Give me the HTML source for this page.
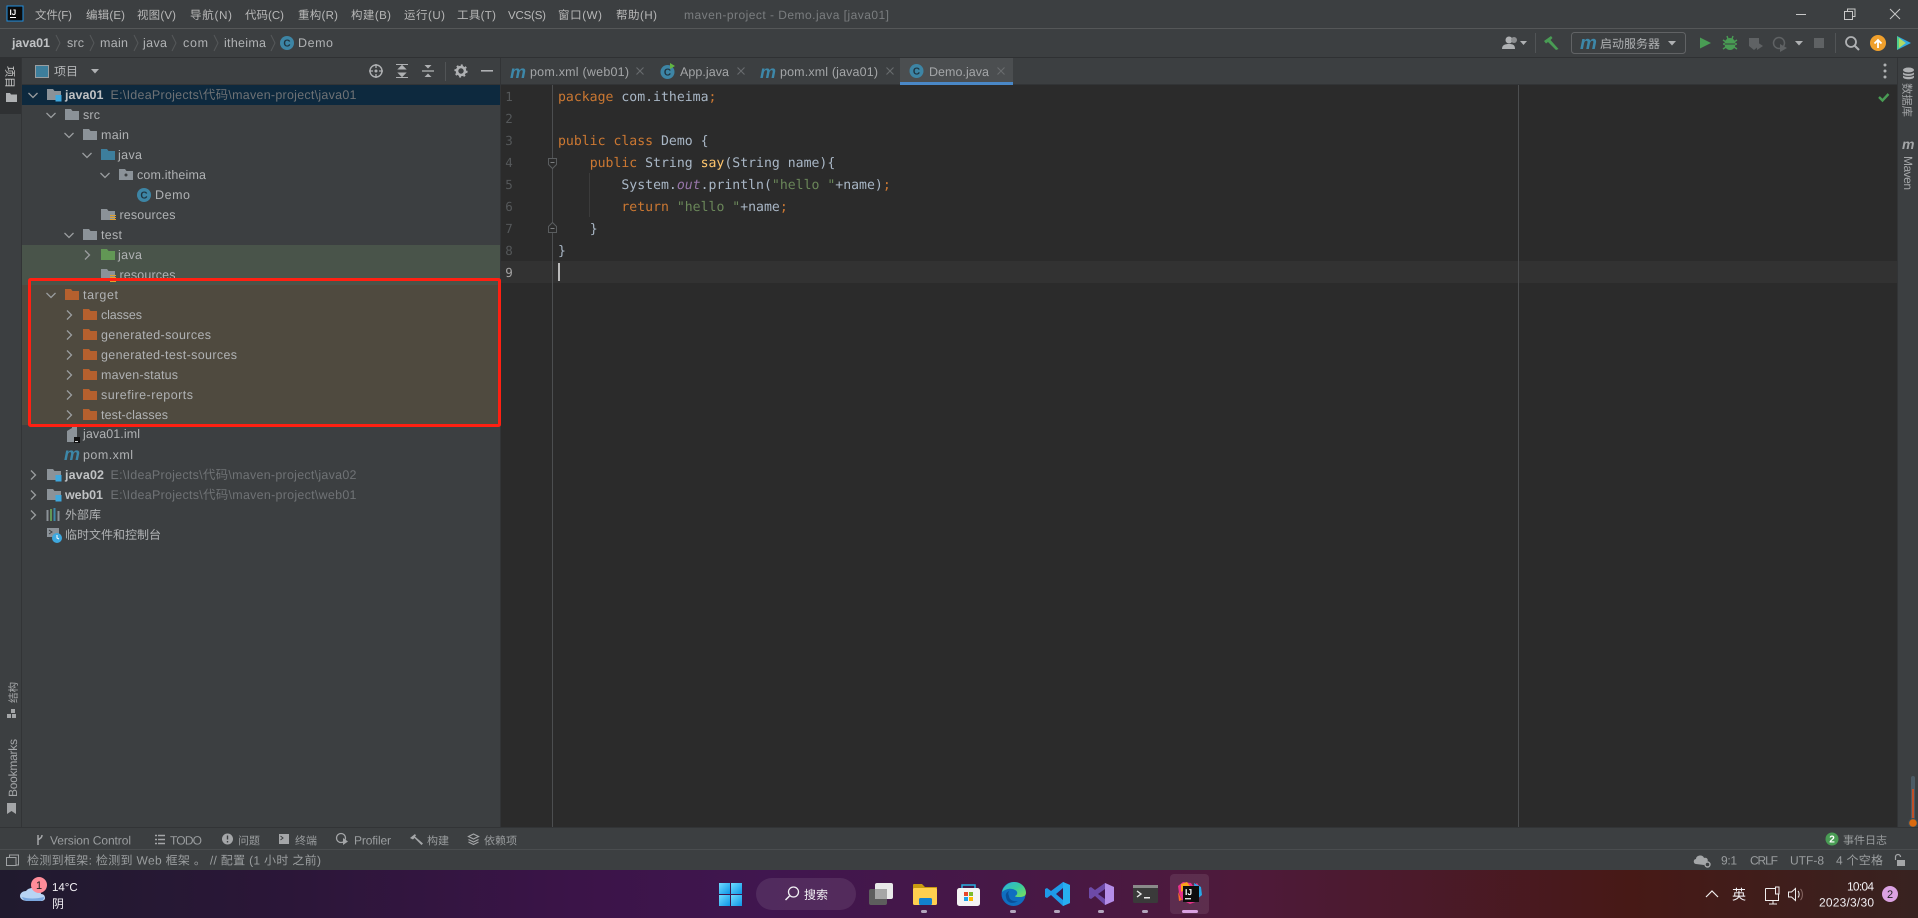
<!DOCTYPE html>
<html><head><meta charset="utf-8"><title>maven-project - Demo.java [java01]</title>
<style>
html,body{margin:0;padding:0;width:1918px;height:918px;overflow:hidden;background:#3c3f41}
svg{display:block;position:absolute;left:0;top:0;filter:blur(.3px)}
text{font-family:"Liberation Sans","Noto Sans CJK SC",sans-serif;font-size:12.5px;fill:#b0b2b4;text-rendering:geometricPrecision;white-space:pre}
.up text{transform:translateY(-.8px)}
.c{font-size:12px}
.m{font-size:11.5px;fill:#b8b8b8}
.b{font-weight:700;fill:#c0c2c4}
.p{font-size:12.5px;fill:#6f7275}
.t{font-size:12.5px;fill:#a4a6a8}
.s{font-size:12px;fill:#9a9d9f}
.s2{font-size:11px;fill:#9a9d9f}
.code{font-family:"DejaVu Sans Mono",monospace;font-size:13.17px;fill:#a9b7c6}
.k{fill:#cc7832}.g{fill:#6a8759}.f{fill:#ffc66d}.o{fill:#9876aa;font-style:italic}
.n{font-family:"DejaVu Sans Mono",monospace;font-size:12.5px;fill:#55585a;text-anchor:middle}
.w{fill:#f2f0f4;font-size:12px}
.mv{font-weight:700;font-style:italic;font-size:22px;fill:#3d87a8;font-family:"Liberation Sans",sans-serif}
.ci{font-size:10px;font-weight:700;fill:#1f3440;text-anchor:middle}
</style></head><body>
<svg width="1918" height="918" viewBox="0 0 1918 918" xmlns="http://www.w3.org/2000/svg">
<defs>
<path id="fo" d="M0 0h6l1.500 2H14v9H0z"/>
<path id="cd" d="M-4.500-2 0 2.500 4.500-2" fill="none" stroke="#9a9d9f" stroke-width="1.300"/>
<path id="cr" d="M-2-4.500 2.500 0-2 4.500" fill="none" stroke="#9a9d9f" stroke-width="1.300"/>
<path id="bc" d="M0-8 4 0 0 8" fill="none" stroke="#55585a" stroke-width="1"/>
<g id="tx"><path d="M-3.500-3.500 3.500 3.500M3.500-3.500-3.500 3.500" stroke="#696c6e" stroke-width="1.100" fill="none"/></g>
<g id="mod"><use href="#fo" fill="#8b9298"/><rect x="8.500" y="6" width="6" height="6.500" fill="#3ea8de"/></g>
<g id="cl"><circle r="7" fill="#3d85a5"/><text class="ci" y="3.500">C</text></g>
<linearGradient id="tb" x1="0" x2="1" y1="0" y2="0">
<stop offset="0" stop-color="#201a2e"/><stop offset=".15" stop-color="#2b1638"/><stop offset=".3" stop-color="#3b1448"/><stop offset=".4" stop-color="#40164f"/><stop offset=".55" stop-color="#481844"/><stop offset=".65" stop-color="#4e1a3a"/><stop offset=".85" stop-color="#471916"/><stop offset="1" stop-color="#382220"/>
</linearGradient>
<linearGradient id="win" x1="0" x2="1" y1="0" y2="1"><stop offset="0" stop-color="#6fdcff"/><stop offset="1" stop-color="#0c95e6"/></linearGradient>
<linearGradient id="edg" x1="0" x2="1" y1="0" y2="1"><stop offset="0" stop-color="#2fb0e0"/><stop offset=".5" stop-color="#38c9a0"/><stop offset="1" stop-color="#7ee05a"/></linearGradient>
</defs>

<rect width="1918" height="918" fill="#3c3f41"/>
<!-- title bar -->
<rect y="28" width="1918" height="1" fill="#555758"/>
<rect x="7" y="6" width="16" height="15" fill="#0b0b0b" stroke="#1f8fe0" stroke-width="1"/>
<text x="9.500" y="15" style="font-size:8px;font-weight:700;fill:#fff">IJ</text><rect x="10" y="17" width="6" height="1" fill="#fff"/>
<g class="menu">
<text class="m" x="35" y="19" textLength="37">文件(F)</text>
<text class="m" x="86" y="19" textLength="39">编辑(E)</text>
<text class="m" x="137" y="19" textLength="39">视图(V)</text>
<text class="m" x="190" y="19" textLength="42">导航(N)</text>
<text class="m" x="245" y="19" textLength="39">代码(C)</text>
<text class="m" x="298" y="19" textLength="40">重构(R)</text>
<text class="m" x="351" y="19" textLength="40">构建(B)</text>
<text class="m" x="404" y="19" textLength="41">运行(U)</text>
<text class="m" x="457" y="19" textLength="39">工具(T)</text>
<text class="m" x="508" y="19" textLength="38">VCS(S)</text>
<text class="m" x="558" y="19" textLength="44">窗口(W)</text>
<text class="m" x="616" y="19" textLength="41">帮助(H)</text>
</g>
<text x="684" y="19" textLength="205" style="font-size:12px;fill:#7a7d7f">maven-project - Demo.java [java01]</text>
<rect x="1796" y="14" width="10" height="1" fill="#c8c8c8"/>
<path d="M1844.500 11.500h8v8h-8zM1847.500 11.500v-2.500h7.500v7.500h-2.500" fill="none" stroke="#c8c8c8"/>
<path d="M1890 9l10 10M1900 9l-10 10" stroke="#c8c8c8" stroke-width="1"/>

<!-- nav bar -->
<rect y="57" width="1918" height="1" fill="#2f3133"/>
<g class="up">
<text class="b" x="12" y="48" textLength="38">java01</text><use href="#bc" x="56" y="43"/>
<text x="67" y="48" textLength="17">src</text><use href="#bc" x="90" y="43"/>
<text x="100" y="48" textLength="28">main</text><use href="#bc" x="134" y="43"/>
<text x="143" y="48" textLength="24">java</text><use href="#bc" x="172" y="43"/>
<text x="183" y="48" textLength="25">com</text><use href="#bc" x="214" y="43"/>
<text x="224" y="48" textLength="42">itheima</text><use href="#bc" x="271" y="43"/>
<use href="#cl" x="287" y="43"/>
<text x="298" y="48" textLength="35">Demo</text>
</g>

<!-- toolbar right -->
<circle cx="1509" cy="40" r="3.500" fill="#afb1b3"/><path d="M1502 49c0-4 3-5 7-5s6 1 6 5z" fill="#afb1b3"/><circle cx="1514" cy="40" r="3" fill="#8c8e90"/>
<path d="M1520 41h7l-3.500 4z" fill="#afb1b3"/>
<rect x="1535" y="33" width="1" height="20" fill="#515456"/>
<path d="M1544 41l7-5 1.500 2-2 2 8 9-2.500 1-8-8-2 1.500z" fill="#499c54"/>
<rect x="1571.500" y="32.500" width="114" height="21" rx="3" fill="none" stroke="#616365"/>
<text class="mv" x="1580" y="49" textLength="17" style="font-size:19px">m</text>
<text x="1600" y="48" textLength="60" style="font-size:12px;fill:#b0b2b4">启动服务器</text>
<path d="M1668 41h8l-4 4.500z" fill="#afb1b3"/>
<path d="M1700 37.500l11 5.500-11 5.500z" fill="#499c54"/>
<ellipse cx="1730" cy="44" rx="5.500" ry="6" fill="#499c54"/><path d="M1723 40l3 2M1737 40l-3 2M1723 44h3M1737 44h-3M1723 49l3-2M1737 49l-3-2M1727 36l1 3M1733 36l-1 3" stroke="#499c54" stroke-width="1.400" fill="none"/><path d="M1725 44h10" stroke="#3c3f41"/>
<path d="M1749 38h10v8l-5 4-5-4z" fill="#5f6264"/><path d="M1757 42l6 4-6 4z" fill="#5f6264"/>
<circle cx="1779" cy="43" r="5.500" fill="none" stroke="#5f6264" stroke-width="1.500"/><path d="M1780 44l7 4-7 4z" fill="#5f6264"/>
<path d="M1795 41h8l-4 4.500z" fill="#afb1b3"/>
<rect x="1814" y="38" width="10" height="10" fill="#5f6264"/>
<rect x="1835" y="33" width="1" height="20" fill="#515456"/>
<circle cx="1851" cy="42" r="5" fill="none" stroke="#afb1b3" stroke-width="1.800"/><path d="M1855 46l4 4" stroke="#afb1b3" stroke-width="2"/>
<circle cx="1878" cy="43" r="8" fill="#f0a02c"/><path d="M1878 48v-7M1874.500 43.500l3.500-3.500 3.500 3.500" stroke="#fff" stroke-width="1.800" fill="none"/>
<path d="M1897 36l14 7-14 7z" fill="#2fa8e0"/><path d="M1897 36l8 7-8 7z" fill="#4fcf8f"/><path d="M1899 38l7 5-7 5z" fill="#f0e24a" opacity=".6"/>

<!-- left stripe -->
<rect y="58" width="21" height="56" fill="#2f3133"/>
<rect x="21" y="58" width="1" height="769" fill="#323436"/>
<text transform="translate(6,66) rotate(90)" style="font-size:11px;fill:#c8c8c8">项目</text>
<path d="M6 93h4l1 1.500h6V102H6z" fill="#afb1b3"/>
<text transform="translate(17,703) rotate(-90)" style="font-size:10.500px;fill:#a4a6a8">结构</text>
<path d="M7 714h4v4H7zM12 714h4v4h-4zM11 709h4v4h-4z" fill="#a4a6a8"/>
<text transform="translate(17,797) rotate(-90)" style="font-size:12px;fill:#a4a6a8" textLength="58">Bookmarks</text>
<path d="M7 803h9v11l-4.500-3-4.500 3z" fill="#a4a6a8"/>

<!-- project header -->
<rect x="35.500" y="65.500" width="13" height="12" fill="#3d7e9c" stroke="#9a9ea1"/>
<text class="c" x="54" y="75.500" textLength="24" style="fill:#b4b6b8">项目</text>
<path d="M91 69h8l-4 4.500z" fill="#afb1b3"/>
<circle cx="376" cy="71" r="6" fill="none" stroke="#afb1b3" stroke-width="1.400"/><circle cx="376" cy="71" r="1.500" fill="#afb1b3"/><path d="M376 64v4M376 74v4M369 71h4M379 71h4" stroke="#afb1b3" stroke-width="1.300"/>
<path d="M396 64.500h12M396 77.500h12M398.500 69l3.500-3.500 3.500 3.500zM398.500 73l3.500 3.500 3.500-3.500z" fill="#afb1b3" stroke="#afb1b3"/>
<path d="M422 71h12" stroke="#afb1b3" stroke-width="1.300"/><path d="M424.500 65l3.500 3.500 3.500-3.500zM424.500 77l3.500-3.500 3.500 3.500z" fill="#afb1b3"/>
<rect x="445" y="62" width="1" height="19" fill="#515456"/>
<circle cx="461" cy="71" r="4" fill="none" stroke="#afb1b3" stroke-width="2.600"/><circle cx="461" cy="71" r="5.800" fill="none" stroke="#afb1b3" stroke-width="1.600" stroke-dasharray="2 2.500"/>
<rect x="481" y="70" width="12" height="1.600" fill="#afb1b3"/>
<rect x="22" y="84" width="478" height="1" fill="#323436"/>

<!-- tree backgrounds -->
<rect x="22" y="85" width="478" height="20" fill="#0d293e"/>
<rect x="22" y="245" width="478" height="40" fill="#49544a"/>
<rect x="22" y="285" width="478" height="140" fill="#4f4a3f"/>
<rect x="500" y="58" width="1" height="769" fill="#323436"/>

<!-- tree -->
<g class="up">
<use href="#cd" x="33" y="95"/><use href="#mod" x="47" y="89"/><text class="b" x="65" y="100" textLength="38.500">java01</text><text class="p" x="110.500" y="100" textLength="246">E:\IdeaProjects\代码\maven-project\java01</text>
<use href="#cd" x="51" y="115"/><use href="#fo" x="65" y="109" fill="#8b9298"/><text x="83" y="120" textLength="17">src</text>
<use href="#cd" x="69" y="135"/><use href="#fo" x="83" y="129" fill="#8b9298"/><text x="101" y="140" textLength="28">main</text>
<use href="#cd" x="87" y="155"/><use href="#fo" x="101" y="149" fill="#3d7e9c"/><text x="118" y="160" textLength="24">java</text>
<use href="#cd" x="105" y="175"/><use href="#fo" x="119" y="169" fill="#8b9298"/><circle cx="126" cy="175" r="1.500" fill="#3c3f41"/><text x="137" y="180" textLength="69">com.itheima</text>
<use href="#cl" x="144" y="195"/><text x="155" y="200" textLength="35">Demo</text>
<use href="#fo" x="101" y="209" fill="#8b9298"/><path d="M110 215.500h6M110 217.500h6M110 219.500h6" stroke="#e0a030"/><text x="119.500" y="220" textLength="56">resources</text>
<use href="#cd" x="69" y="235"/><use href="#fo" x="83" y="229" fill="#8b9298"/><text x="101" y="240" textLength="21">test</text>
<use href="#cr" x="87" y="255"/><use href="#fo" x="101" y="249" fill="#629755"/><text x="118" y="260" textLength="24">java</text>
<use href="#fo" x="101" y="269" fill="#8b9298"/><path d="M110 275.500h6M110 277.500h6M110 279.500h6" stroke="#e0a030"/><text x="119.500" y="280" textLength="56">resources</text>
<rect x="22" y="279" width="478" height="6" fill="#49544a"/>
<rect x="101" y="279" width="14" height="1" fill="#8b9298"/>
<path d="M110 281.500h6" stroke="#e0a030"/>
<use href="#cd" x="51" y="295"/><use href="#fo" x="65" y="289" fill="#b5602e"/><text x="83" y="300" textLength="35">target</text>
<use href="#cr" x="69" y="315"/><use href="#fo" x="83" y="309" fill="#b5602e"/><text x="101" y="320" textLength="41">classes</text>
<use href="#cr" x="69" y="335"/><use href="#fo" x="83" y="329" fill="#b5602e"/><text x="101" y="340" textLength="110">generated-sources</text>
<use href="#cr" x="69" y="355"/><use href="#fo" x="83" y="349" fill="#b5602e"/><text x="101" y="360" textLength="136">generated-test-sources</text>
<use href="#cr" x="69" y="375"/><use href="#fo" x="83" y="369" fill="#b5602e"/><text x="101" y="380" textLength="77">maven-status</text>
<use href="#cr" x="69" y="395"/><use href="#fo" x="83" y="389" fill="#b5602e"/><text x="101" y="400" textLength="92">surefire-reports</text>
<use href="#cr" x="69" y="415"/><use href="#fo" x="83" y="409" fill="#b5602e"/><text x="101" y="420" textLength="67">test-classes</text>
<path d="M67 431l5-3 0-2h5v16H67z" fill="#8b9298"/><rect x="74" y="437" width="6" height="6" fill="#111"/><rect x="75" y="441" width="3" height="1" fill="#ddd"/><text x="83" y="439" textLength="57">java01.iml</text>
<text class="mv" x="64" y="461" textLength="16" style="font-size:18px">m</text><text x="83" y="460" textLength="50">pom.xml</text>
<use href="#cr" x="33" y="475"/><use href="#mod" x="47" y="469"/><text class="b" x="65" y="480" textLength="39">java02</text><text class="p" x="110.500" y="480" textLength="246">E:\IdeaProjects\代码\maven-project\java02</text>
<use href="#cr" x="33" y="495"/><use href="#mod" x="47" y="489"/><text class="b" x="65" y="500" textLength="38">web01</text><text class="p" x="110.500" y="500" textLength="246">E:\IdeaProjects\代码\maven-project\web01</text>
<use href="#cr" x="33" y="515"/><path d="M47.500 510v11" stroke="#8b9298" stroke-width="2"/><path d="M51 509v12" stroke="#629755" stroke-width="2"/><path d="M54.500 508v13" stroke="#3d87a8" stroke-width="2"/><path d="M58.500 511v10" stroke="#8b9298" stroke-width="2"/>
<text class="c" x="65" y="520" textLength="36">外部库</text>
<rect x="47" y="528" width="12" height="9" fill="#8b9298"/><path d="M49 530l3 2-3 2" stroke="#3c3f41" fill="none"/><circle cx="57" cy="538" r="5" fill="#3ea8de"/><path d="M57 535v3l2 1" stroke="#fff" fill="none"/>
<text class="c" x="65" y="540" textLength="96">临时文件和控制台</text>
</g>
<rect x="29.500" y="279.500" width="470" height="146" rx="1" fill="none" stroke="#ff2012" stroke-width="3"/>

<!-- tab bar -->
<rect x="501" y="84" width="1397" height="1" fill="#323436"/>
<text class="mv" x="510" y="78" textLength="15" style="font-size:18px">m</text>
<text class="t" x="530" y="76" textLength="99">pom.xml (web01)</text><use href="#tx" x="640" y="71"/>
<use href="#cl" x="667.500" y="72"/><path d="M670 63l5 3-5 3z" fill="#62b543"/>
<text class="t" x="680" y="76" textLength="49">App.java</text><use href="#tx" x="741" y="71"/>
<text class="mv" x="760" y="78" textLength="15" style="font-size:18px">m</text>
<text class="t" x="780" y="76" textLength="98">pom.xml (java01)</text><use href="#tx" x="890" y="71"/>
<rect x="900" y="58" width="113" height="24" fill="#4b4e50"/><rect x="900" y="82" width="113" height="3" fill="#4a88c7"/>
<use href="#cl" x="916.500" y="71"/>
<text class="t" x="929" y="76" textLength="60">Demo.java</text><use href="#tx" x="1001" y="71"/>
<circle cx="1885" cy="65" r="1.500" fill="#afb1b3"/><circle cx="1885" cy="71" r="1.500" fill="#afb1b3"/><circle cx="1885" cy="77" r="1.500" fill="#afb1b3"/>

<!-- editor -->
<rect x="501" y="85" width="1397" height="742" fill="#2b2b2b"/>
<rect x="501" y="261" width="1397" height="22" fill="#323232"/>
<rect x="552" y="85" width="1" height="742" fill="#4c4e50"/>
<rect x="1518" y="85" width="1" height="742" fill="#4c4e50"/>
<rect x="589" y="173" width="1" height="44" fill="#3b3b3b"/>
<path d="M548.500 158.500h8v6l-4 4-4-4z" fill="#2b2b2b" stroke="#5a5d5f"/><path d="M550.500 162.500h4" stroke="#7a7d7f"/>
<path d="M548.500 232.500h8v-6l-4-4-4 4z" fill="#2b2b2b" stroke="#5a5d5f"/><path d="M550.500 228.500h4" stroke="#7a7d7f"/>
<text class="n" x="509" y="101">1</text><text class="n" x="509" y="123">2</text><text class="n" x="509" y="145">3</text><text class="n" x="509" y="167">4</text><text class="n" x="509" y="189">5</text><text class="n" x="509" y="211">6</text><text class="n" x="509" y="233">7</text><text class="n" x="509" y="255">8</text><text class="n" x="509" y="277" style="fill:#a4a3a3">9</text>
<text class="code" x="558" y="101"><tspan class="k">package</tspan> com.itheima<tspan class="k">;</tspan></text>
<text class="code" x="558" y="145"><tspan class="k">public class</tspan> Demo {</text>
<text class="code" x="589.700" y="167"><tspan class="k">public</tspan> String <tspan class="f">say</tspan>(String name){</text>
<text class="code" x="621.400" y="189">System.<tspan class="o">out</tspan>.println(<tspan class="g">"hello "</tspan>+name)<tspan class="k">;</tspan></text>
<text class="code" x="621.400" y="211"><tspan class="k">return</tspan> <tspan class="g">"hello "</tspan>+name<tspan class="k">;</tspan></text>
<text class="code" x="589.700" y="233">}</text>
<text class="code" x="558" y="255">}</text>
<rect x="558" y="263" width="2" height="18" fill="#bbbbbb"/>
<path d="M1879 97l3.500 3.500 6-6.500" fill="none" stroke="#499c54" stroke-width="2.400"/>

<!-- right stripe -->
<rect x="1898" y="58" width="20" height="769" fill="#3c3f41"/>
<rect x="1897" y="58" width="1" height="769" fill="#323436"/>
<ellipse cx="1908.500" cy="70" rx="5.500" ry="2.500" fill="#afb1b3"/><path d="M1903 72v5c0 3 11 3 11 0v-5c0 2.500-11 2.500-11 0z" fill="#afb1b3"/><path d="M1903 74.500c0 2.500 11 2.500 11 0" stroke="#3c3f41" fill="none"/>
<text transform="translate(1903,83) rotate(90)" style="font-size:11.300px;fill:#a4a6a8">数据库</text>
<text x="1902" y="149" textLength="13" style="font-size:14px;font-weight:700;font-style:italic;fill:#a4a6a8">m</text>
<text transform="translate(1904,156) rotate(90)" textLength="34" style="font-size:12px;fill:#a4a6a8">Maven</text>
<rect x="1911" y="776" width="4" height="47" rx="2" fill="#4c5a64"/>
<rect x="1912" y="789" width="2" height="33" fill="#c0502a"/>
<circle cx="1913" cy="823" r="5" fill="#3a4a56"/><circle cx="1913" cy="823" r="3.800" fill="#d96a10"/>

<!-- bottom tool bar -->
<rect y="827" width="1918" height="1" fill="#323436"/>
<rect y="849" width="1918" height="1" fill="#4a4d4f"/>
<g fill="none" stroke="#a4a6a8" stroke-width="1.500"><path d="M38 835v10M42 835c0 4-4 4-4 5"/></g>
<text class="s" x="50" y="844.500" textLength="81">Version Control</text>
<path d="M155 835.500h2M155 839.500h2M155 843.500h2M158 835.500h7M158 839.500h7M158 843.500h7" stroke="#a4a6a8" stroke-width="1.600"/>
<text class="s" x="170" y="844.500" textLength="32">TODO</text>
<circle cx="227.500" cy="839" r="5.500" fill="#a4a6a8"/><path d="M227.500 835.500v4M227.500 841v1.500" stroke="#3c3f41" stroke-width="1.400"/>
<text class="s2" x="238" y="844.500">问题</text>
<rect x="279" y="834" width="10" height="10" fill="#a4a6a8"/><path d="M280.500 836l2.500 2-2.500 2" stroke="#3c3f41" fill="none"/>
<text class="s2" x="295" y="844.500">终端</text>
<circle cx="341" cy="838" r="4.500" fill="none" stroke="#a4a6a8" stroke-width="1.300"/><path d="M343 838l5 3.500-5 3.500z" fill="#a4a6a8"/>
<text class="s" x="354" y="844.500" textLength="37">Profiler</text>
<path d="M410 838l5-4 1 1.500-1 1 8 7-1.500 1.500-7-7-1.500 1.500z" fill="#a4a6a8"/>
<text class="s2" x="427" y="844.500">构建</text>
<path d="M473.500 834l5 2.500-5 2.500-5-2.500zM468.500 839.500l5 2.500 5-2.500M468.500 842l5 2.500 5-2.500" fill="none" stroke="#a4a6a8" stroke-width="1.200"/>
<text class="s2" x="484" y="844.500">依赖项</text>
<circle cx="1832" cy="839" r="6.500" fill="#499c54"/>
<text x="1832" y="842.500" text-anchor="middle" style="font-size:10px;font-weight:700;fill:#fff">2</text>
<text class="s2" x="1843" y="844">事件日志</text>

<!-- status bar -->
<path d="M9.500 857.500v-2.500h9v10h-2.500M6.500 857.500h9.500v8h-9.500z" fill="none" stroke="#9fa2a4" stroke-width="1"/>
<text class="s" x="27" y="864.500" textLength="294">检测到框架: 检测到 Web 框架 。 // 配置 (1 小时 之前)</text>
<path d="M1696 864c-3 0-3-5 0-5 0-4 7-5 8-1 3-1 5 2 3 4l-3 3z" fill="#a4a6a8"/>
<circle cx="1707.500" cy="864.500" r="2.500" fill="none" stroke="#a4a6a8" stroke-width="1.400"/>
<text class="s" x="1721" y="864.500" textLength="16">9:1</text>
<text class="s" x="1750" y="864.500" textLength="28">CRLF</text>
<text class="s" x="1790" y="864.500" textLength="34">UTF-8</text>
<text class="s" x="1836" y="864.500" textLength="47">4 个空格</text>
<path d="M1895.500 860v-3a2.500 2.500 0 0 1 5 0" fill="none" stroke="#a4a6a8" stroke-width="1.200"/><rect x="1897" y="860" width="8" height="6" fill="#a4a6a8"/>

<!-- taskbar -->
<rect y="870" width="1918" height="48" fill="url(#tb)"/>
<path d="M28 901c-5 0-8-2-8-5 0-3 3-5 6-5 2-3 7-4 10-2 3 0 5 3 5 5 3 0 4 2 4 4 0 2-2 3-4 3z" fill="#b8d4f4"/><path d="M22 897c6 2 14 2 22 0 0 3-2 4-4 4H28c-3 0-5-1-6-4z" fill="#7ba8e0"/>
<circle cx="39" cy="885" r="8" fill="#ff8c99"/><text x="39" y="889" text-anchor="middle" style="font-size:11px;fill:#222">1</text>
<text class="w" x="52" y="891" style="font-size:11.500px">14°C</text>
<text class="w" x="52" y="908" textLength="12">阴</text>

<rect x="719" y="883" width="11" height="11" fill="url(#win)"/><rect x="731" y="883" width="11" height="11" fill="url(#win)"/><rect x="719" y="895" width="11" height="11" fill="url(#win)"/><rect x="731" y="895" width="11" height="11" fill="url(#win)"/>
<rect x="756" y="878" width="100" height="32" rx="16" fill="#ffffff" opacity=".09"/>
<circle cx="793.500" cy="892" r="5" fill="none" stroke="#f2f0f4" stroke-width="1.300"/><path d="M789.500 896l-4 4" stroke="#f2f0f4" stroke-width="1.500"/>
<text class="w" x="804" y="899" textLength="24">搜索</text>

<rect x="869" y="889" width="18" height="16" rx="2" fill="#5d5d5d"/><rect x="875" y="883" width="18" height="16" rx="2" fill="#e9e9e9"/><rect x="875" y="889" width="12" height="10" fill="#a6a6a6"/>

<path d="M913 885a1 1 0 0 1 1-1h8l3 3h12v3h-24z" fill="#c99a10"/><rect x="913" y="888" width="24" height="17" rx="1.500" fill="#ffcf4f"/><rect x="919" y="898" width="13" height="7" rx="1.500" fill="#1281d0"/>
<rect x="957" y="888" width="23" height="18" rx="2.500" fill="#f4f4f4"/><path d="M962 888v-3h13v3" fill="none" stroke="#2ab0e0" stroke-width="1.500"/><rect x="964" y="892" width="4" height="4" fill="#e8452a"/><rect x="969" y="892" width="4" height="4" fill="#7dbb2a"/><rect x="964" y="897" width="4" height="4" fill="#1ea0e8"/><rect x="969" y="897" width="4" height="4" fill="#ffb900"/>

<circle cx="1013.500" cy="894" r="12" fill="#0f6ec0"/><path d="M1002 892c2-8 9-10 12-10 7 0 12 5 12 11 0 3-3 4-6 4-3 0-5 0-5-1 3-1 3-5 0-6-5-3-11 0-13 2z" fill="url(#edg)"/><path d="M1009 896c0 4 5 6 9 5-4 3-11 3-12-4-1-3 1-5 3-6-1 2-1 3 0 5z" fill="#0a4e96"/>

<path d="M1063 882l7 3v18l-7 3-12-11-4 3-2-1v-8l2-1 4 3z" fill="#1e9ae8"/><path d="M1063 888l-7 6 7 6z" fill="#3c1650"/><path d="M1063 882v24l7-3v-18z" fill="#27aef0"/>

<path d="M1105 883l9 4v14l-9 4-10-9-4 3-2-1v-10l2-1 4 3z" fill="#6d4aa8"/><path d="M1105 883l9 4v14l-9 4z" fill="#b48de8"/><path d="M1105 889l-7 5 7 5z" fill="#3f164c"/>

<rect x="1133" y="885" width="25" height="18" rx="1.500" fill="#3a3a3a"/><rect x="1133" y="885" width="25" height="3" fill="#8a8a8a"/><path d="M1137 891l4 3-4 3" fill="none" stroke="#e8e8e8" stroke-width="1.400"/><rect x="1144" y="897" width="6" height="1.500" fill="#e8e8e8"/>

<rect x="1170" y="874" width="39" height="40" rx="4" fill="#ffffff" opacity=".09"/>
<path d="M1178 886l5-4 8 1 2 3 4-3 4 6-3 12-8 3-8-4-3-7z" fill="#e8308a"/><path d="M1181 884l6-2 3 4-9 6z" fill="#f9a11b"/><path d="M1194 883l7 4 1 8-6 5z" fill="#27a8e8"/><path d="M1178 892l4 8-3 1z" fill="#ff6a2a"/>
<rect x="1183" y="886" width="16" height="16" fill="#0d0d0d"/><text x="1185" y="895" style="font-size:8.500px;font-weight:700;fill:#fff">IJ</text><rect x="1185" y="898" width="6" height="1.400" fill="#ddd"/>
<rect x="921" y="910" width="6" height="3" rx="1.500" fill="#b3a6bd"/><rect x="1010" y="910" width="6" height="3" rx="1.500" fill="#b3a6bd"/><rect x="1054" y="910" width="6" height="3" rx="1.500" fill="#b3a6bd"/><rect x="1098" y="910" width="6" height="3" rx="1.500" fill="#b3a6bd"/><rect x="1142" y="910" width="6" height="3" rx="1.500" fill="#b3a6bd"/><rect x="1182" y="910" width="16" height="3" rx="1.500" fill="#dba2e2"/>

<path d="M1706 897l6-6 6 6" fill="none" stroke="#f0eeee" stroke-width="1.200"/>
<text class="w" x="1732" y="899.500" textLength="14" style="font-size:14px">英</text>
<path d="M1765.500 888.500h10M1765.500 888.500v12h13v-6M1769 904h8M1773 900.500v3.500" fill="none" stroke="#f0eeee" stroke-width="1"/><rect x="1775.500" y="887" width="3.500" height="7" fill="#4a2020" stroke="#f0eeee"/>
<path d="M1788.500 892v5h3l4 3.500v-12l-4 3.500z" fill="none" stroke="#f0eeee"/><path d="M1798 891c1.500 1.500 1.500 5 0 6.500" fill="none" stroke="#f0eeee"/><path d="M1800.500 889c2.500 2.500 2.500 8.500 0 11" fill="none" stroke="#8a6a66"/>
<text class="w" x="1874" y="890.500" text-anchor="end" textLength="27">10:04</text>
<text class="w" x="1874" y="906.500" text-anchor="end" textLength="55">2023/3/30</text>
<circle cx="1890" cy="894" r="8" fill="#dba2e2"/><text x="1890" y="898" text-anchor="middle" style="font-size:11px;fill:#222">2</text>
</svg>
</body></html>
